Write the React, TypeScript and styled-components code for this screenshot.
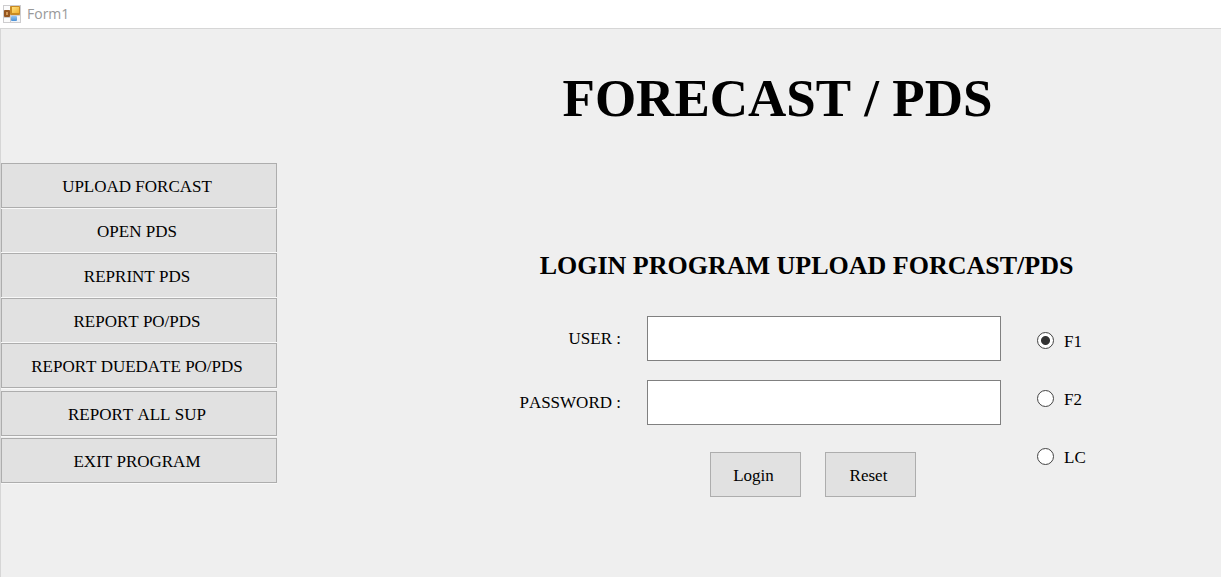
import React, { useState } from "react";
import styled, { createGlobalStyle } from "styled-components";

const GlobalStyle = createGlobalStyle`
  *, *::before, *::after { box-sizing: border-box; }
  body {
    margin: 0;
    background: #efefef;
    color: #000;
    font: 17px/20px "Liberation Serif", "Times New Roman", serif;
  }
  body, button, input { font-kerning: none; }
`;

const Window = styled.div`
  display: flex;
  flex-direction: column;
  min-height: 100vh;
`;

const TitleBar = styled.header`
  display: flex;
  align-items: center;
  gap: 6px;
  height: 28px;
  padding: 0 3px 1px;
  background: #fff;
  color: #999;
  font: 14px/20px "Open Sans", "Noto Sans", sans-serif;
`;

const Client = styled.div`
  display: flex;
  flex: 1;
  border-top: 1px solid #d6d6d6;
  border-left: 1px solid #d6d6d6;
`;

const Sidebar = styled.nav`
  flex: none;
  width: 276px;
  padding-top: 134px;
`;

const BaseButton = styled.button`
  height: 45px;
  padding: 2px 4px 0 0;
  border: 1px solid #adadad;
  border-radius: 0;
  background: #e1e1e1;
  color: #000;
  font: inherit;
  cursor: pointer;

  &:focus-visible {
    outline: 1px dotted #333;
    outline-offset: -4px;
  }
`;

type Edge = "all" | "top" | "sides";

const MenuButton = styled(BaseButton)<{ $edge: Edge; $gap: number }>`
  display: block;
  width: 100%;
  height: ${(p) => ({ all: 45, top: 44, sides: 43 })[p.$edge]}px;
  margin-bottom: ${(p) => p.$gap}px;
  border-top-width: ${(p) => (p.$edge === "sides" ? 0 : 1)}px;
  border-bottom-width: ${(p) => (p.$edge === "all" ? 1 : 0)}px;
  box-shadow: 0 1px 0 #f8f8f8;
`;

const Main = styled.main`
  flex: 1;
  min-width: 0;
  padding: 39px 136px 40px 239px;
`;

const Title = styled.h1`
  margin: 0;
  padding-right: 46px;
  font-size: 53px;
  line-height: 60px;
  text-align: center;
  white-space: nowrap;
`;

const Heading = styled.h2`
  margin: 122px 0 0;
  padding-left: 12px;
  font-size: 26px;
  line-height: 32px;
  text-align: center;
  white-space: nowrap;
`;

const LoginForm = styled.form`
  display: flex;
  gap: 36px;
  margin-top: 34px;
`;

const Fields = styled.div`
  display: grid;
  flex: 1;
  grid-template-columns: 105px minmax(0, 1fr);
  align-items: center;
  gap: 19px 26px;
`;

const FieldLabel = styled.label`
  text-align: right;
  white-space: nowrap;
`;

const TextBox = styled.input`
  width: 100%;
  height: 45px;
  padding: 0 8px;
  border: 1px solid #808080;
  border-radius: 0;
  background: #fff;
  font: inherit;
  outline: none;
`;

const Actions = styled.div`
  display: flex;
  grid-column: 2;
  justify-content: center;
  gap: 24px;
  padding: 8px 22px 0 0;
`;

const ActionButton = styled(BaseButton)`
  width: 91px;
`;

const Plants = styled.fieldset`
  display: flex;
  flex-direction: column;
  gap: 38px;
  min-width: 0;
  margin: 0;
  padding: 16px 0 0;
  border: 0;
`;

const PlantLabel = styled.label`
  display: flex;
  align-items: center;
  gap: 10px;
  width: 48px;
`;

const Radio = styled.input`
  flex: none;
  width: 17px;
  height: 17px;
  margin: 0 0 3px;
  appearance: none;
  border: 1px solid #444;
  border-radius: 50%;
  background: #fff;

  &:checked {
    background: radial-gradient(circle, #333 0 4px, #fff 5px);
  }
`;

function FormIcon() {
  return (
    <svg width="18" height="18" viewBox="0 0 18 18" aria-hidden="true">
      <defs>
        <linearGradient id="gold" x1="0" y1="0" x2="1" y2="1">
          <stop offset="0" stopColor="#ffe07c" />
          <stop offset="1" stopColor="#efb02e" />
        </linearGradient>
        <linearGradient id="blue" x1="0" y1="0" x2="0" y2="1">
          <stop offset="0" stopColor="#93c4f0" />
          <stop offset="1" stopColor="#4a90d6" />
        </linearGradient>
      </defs>
      <rect x="0" y="0" width="18" height="18" fill="#cdccce" />
      <rect x="1" y="1" width="6" height="4" fill="#fbfbfb" />
      <rect x="1" y="13" width="6" height="4" fill="#fbfbfb" />
      <rect x="1" y="5" width="6" height="7" rx="1" fill="#95561f" />
      <rect x="3" y="7" width="2" height="3" fill="#d39a5a" />
      <rect x="7" y="1" width="10" height="9" rx="1" fill="#c98a22" />
      <rect x="9" y="2" width="7" height="6" fill="url(#gold)" />
      <rect x="8" y="11" width="9" height="6" fill="#f1f4f8" />
      <rect x="8" y="11" width="6" height="5" rx="1" fill="url(#blue)" />
    </svg>
  );
}

const menu: { text: string; edge: Edge; gap: number }[] = [
  { text: "UPLOAD FORCAST", edge: "all", gap: 1 },
  { text: "OPEN PDS", edge: "sides", gap: 1 },
  { text: "REPRINT PDS", edge: "top", gap: 1 },
  { text: "REPORT PO/PDS", edge: "top", gap: 1 },
  { text: "REPORT DUEDATE PO/PDS", edge: "all", gap: 3 },
  { text: "REPORT ALL SUP", edge: "all", gap: 2 },
  { text: "EXIT PROGRAM", edge: "all", gap: 0 },
];

const plants = ["F1", "F2", "LC"];

export default function App() {
  const [plant, setPlant] = useState("F1");

  return (
    <>
      <GlobalStyle />
      <Window>
        <TitleBar>
          <FormIcon />
          <span>Form1</span>
        </TitleBar>
        <Client>
          <Sidebar>
            {menu.map((item) => (
              <MenuButton key={item.text} type="button" $edge={item.edge} $gap={item.gap}>
                {item.text}
              </MenuButton>
            ))}
          </Sidebar>
          <Main>
            <Title>FORECAST / PDS</Title>
            <Heading>LOGIN PROGRAM UPLOAD FORCAST/PDS</Heading>
            <LoginForm
              onSubmit={(e) => e.preventDefault()}
              onReset={() => setPlant("F1")}
            >
              <Fields>
                <FieldLabel htmlFor="user">USER :</FieldLabel>
                <TextBox id="user" type="text" autoComplete="username" />
                <FieldLabel htmlFor="password">PASSWORD :</FieldLabel>
                <TextBox id="password" type="password" autoComplete="current-password" />
                <Actions>
                  <ActionButton type="submit">Login</ActionButton>
                  <ActionButton type="reset">Reset</ActionButton>
                </Actions>
              </Fields>
              <Plants aria-label="Plant">
                {plants.map((name) => (
                  <PlantLabel key={name}>
                    <Radio
                      type="radio"
                      name="plant"
                      value={name}
                      checked={plant === name}
                      onChange={() => setPlant(name)}
                    />
                    {name}
                  </PlantLabel>
                ))}
              </Plants>
            </LoginForm>
          </Main>
        </Client>
      </Window>
    </>
  );
}
